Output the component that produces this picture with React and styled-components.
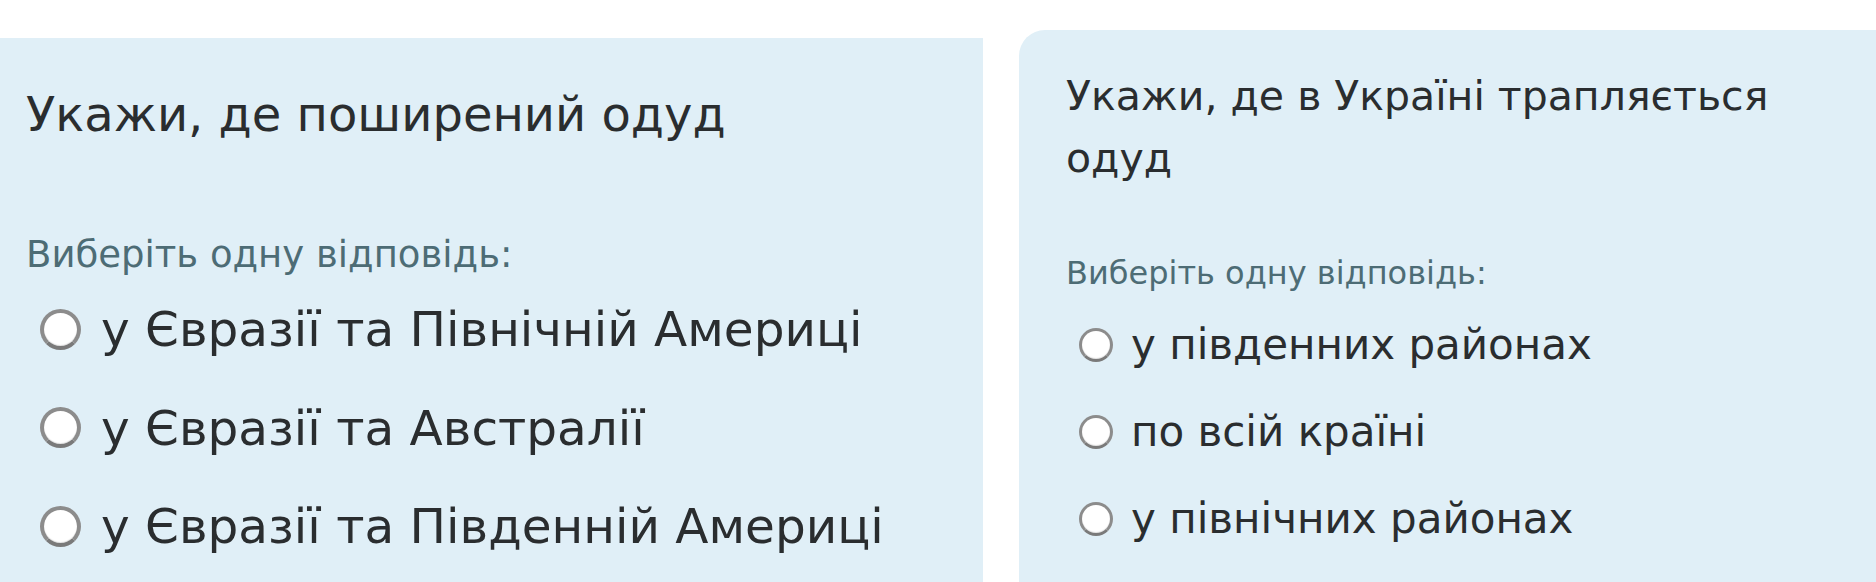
import React from "react";
import styled, { createGlobalStyle } from "styled-components";

const Global = createGlobalStyle`
  html, body { margin: 0; padding: 0; background: #ffffff; }
  body { font-family: "DejaVu Sans", "Noto Sans", sans-serif; }
`;

const Page = styled.div`
  display: flex;
  align-items: flex-start;
  width: 1876px;
  height: 582px;
  overflow: hidden;
  background: #ffffff;
`;

const Panel = styled.section`
  box-sizing: border-box;
  background: #e0eff7;
  margin-top: ${(p) => p.$top}px;
  height: ${(p) => 582 - p.$top}px;
  width: ${(p) => (p.$width ? `${p.$width}px` : "auto")};
  flex: ${(p) => (p.$width ? "none" : "1")};
  margin-left: ${(p) => p.$gap || 0}px;
  padding: ${(p) => p.$pad};
  border-top-left-radius: ${(p) => p.$radius || 0}px;
  display: flex;
  flex-direction: column;
`;

const Title = styled.h2`
  margin: 0;
  font-weight: 400;
  color: #2a2d2f;
  font-size: ${(p) => p.$size}px;
  line-height: ${(p) => p.$lh}px;
  max-width: ${(p) => p.$max || 2000}px;
`;

const Hint = styled.div`
  color: #4d6c75;
  font-size: ${(p) => p.$size}px;
  line-height: ${(p) => p.$lh}px;
  margin-top: ${(p) => p.$mt}px;
`;

const Options = styled.div`
  display: flex;
  flex-direction: column;
  gap: ${(p) => p.$gap}px;
  margin-top: ${(p) => p.$mt}px;
  padding-left: ${(p) => p.$indent}px;
`;

const Option = styled.label`
  display: flex;
  align-items: center;
  gap: ${(p) => p.$gap}px;
  color: #2a2d2f;
  font-size: ${(p) => p.$size}px;
  line-height: ${(p) => p.$lh}px;
  white-space: nowrap;
`;

const Radio = styled.span`
  box-sizing: border-box;
  flex: none;
  width: ${(p) => p.$d}px;
  height: ${(p) => p.$d}px;
  border-radius: 50%;
  background: #ffffff;
  border: ${(p) => p.$b}px solid #8c8c8c;
  border-bottom-color: #7a7a7a;
  box-shadow: inset 0 -1px 1px rgba(0, 0, 0, 0.12);
`;

const left = {
  title: "Укажи, де поширений одуд",
  options: [
    "у Євразії та Північній Америці",
    "у Євразії та Австралії",
    "у Євразії та Південній Америці",
  ],
};

const right = {
  title: "Укажи, де в Україні трапляється одуд",
  options: ["у південних районах", "по всій країні", "у північних районах"],
};

export default function App() {
  return (
    <>
      <Global />
      <Page>
        <Panel $top={38} $width={983} $pad="46px 0 0 26px">
          <Title $size={48} $lh={60}>{left.title}</Title>
          <Hint $size={37} $lh={46} $mt={88}>Виберіть одну відповідь:</Hint>
          <Options $gap={38.5} $mt={21} $indent={14}>
            {left.options.map((o) => (
              <Option key={o} $size={48.5} $lh={60} $gap={20}>
                <Radio $d={41} $b={4} />
                {o}
              </Option>
            ))}
          </Options>
        </Panel>
        <Panel $top={30} $gap={36} $radius={26} $pad="35px 0 0 47px">
          <Title $size={41} $lh={62} $max={740}>{right.title}</Title>
          <Hint $size={32} $lh={40} $mt={64}>Виберіть одну відповідь:</Hint>
          <Options $gap={37} $mt={27} $indent={13}>
            {right.options.map((o) => (
              <Option key={o} $size={42} $lh={50} $gap={18}>
                <Radio $d={34} $b={3.5} />
                {o}
              </Option>
            ))}
          </Options>
        </Panel>
      </Page>
    </>
  );
}
